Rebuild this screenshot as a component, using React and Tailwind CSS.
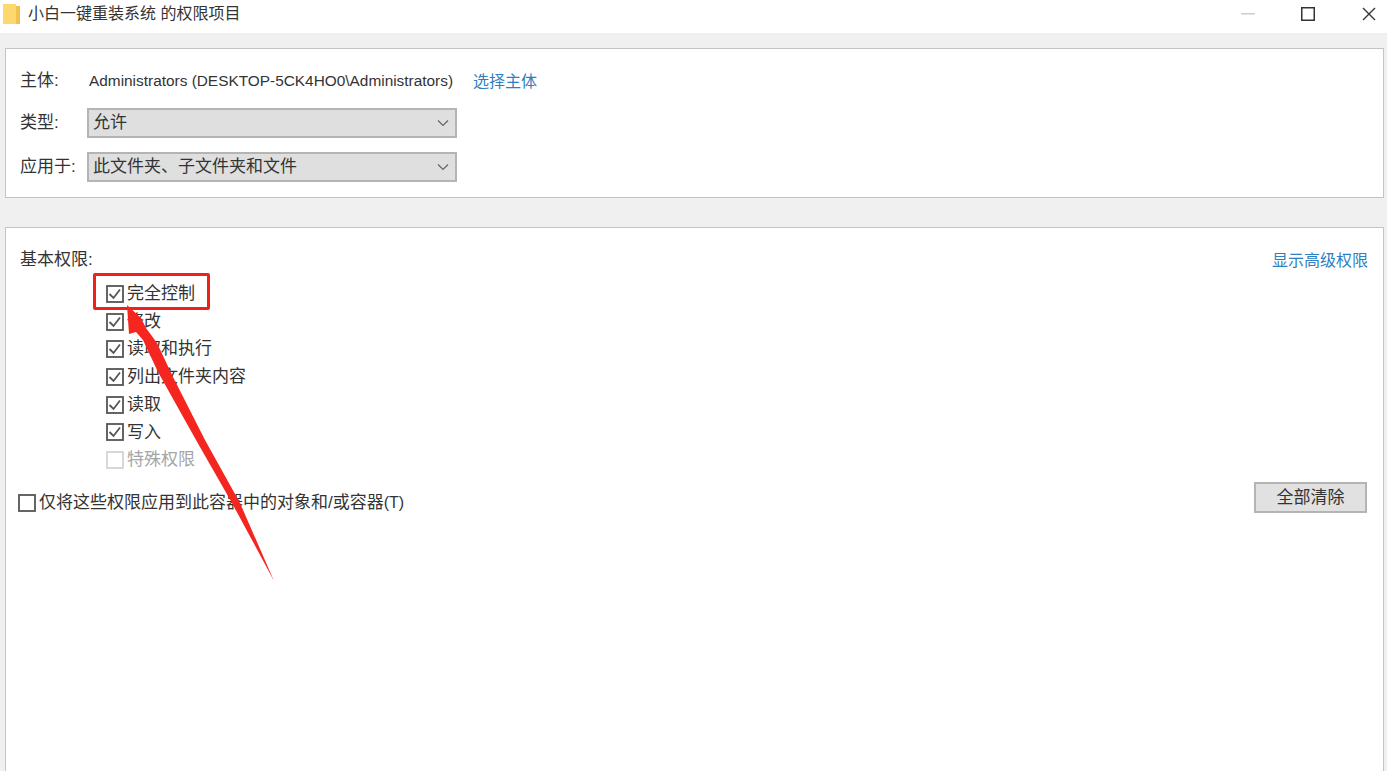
const font = "font-['Liberation_Sans','Noto_Sans_CJK_SC',sans-serif]";

const permissions = [
  { label: "完全控制", checked: true },
  { label: "修改", checked: true },
  { label: "读取和执行", checked: true },
  { label: "列出文件夹内容", checked: true },
  { label: "读取", checked: true },
  { label: "写入", checked: true },
  { label: "特殊权限", checked: false, disabled: true },
];

function Checkbox({ checked, disabled }) {
  return (
    <svg width="18" height="18" viewBox="0 0 18 18" className="shrink-0">
      <rect x="1" y="1" width="16" height="16" fill="#fff" stroke={disabled ? "#d4d4d4" : "#555"} strokeWidth="1.8" />
      {checked && <path d="M3.5 9 L7.5 13 L14 4.5" fill="none" stroke="#555" strokeWidth="1.8" />}
    </svg>
  );
}

function Select({ value }) {
  return (
    <div className="flex h-[30px] w-[370px] items-center justify-between border-2 border-[#b4b4b4] bg-[#dfdfdf] pl-[4px] pr-[3px] text-[17px] text-[#333]">
      <span>{value}</span>
      <svg width="18" height="18" viewBox="0 0 18 18">
        <path d="M4 6.5 L9 11.5 L14 6.5" fill="none" stroke="#666" strokeWidth="1.2" />
      </svg>
    </div>
  );
}

export default function App() {
  return (
    <div className={`${font} relative h-[771px] w-[1387px] overflow-hidden bg-[#f0f0f0] text-[#333]`}>
      {/* Title bar */}
      <div className="flex h-[33px] items-center bg-white pl-[3px]">
        <svg width="18" height="20" viewBox="0 0 18 20" className="mb-[5px]">
          <path d="M0 0 H13 V20 H0 Z" fill="#fbd96f" />
          <path d="M13 2 H17 V20 H13 Z" fill="#f0c14f" />
        </svg>
        <span className="ml-[7px] mb-[5px] text-[16px] text-[#333]">小白一键重装系统 的权限项目</span>
        <div className="ml-auto mb-[5px] flex items-center">
          <svg width="14" height="2" viewBox="0 0 14 2" className="mr-[46px]">
            <rect width="14" height="1.5" fill="#ccc" />
          </svg>
          <svg width="14" height="14" viewBox="0 0 14 14" className="mr-[47px]">
            <rect x="0.75" y="0.75" width="12.5" height="12.5" fill="none" stroke="#333" strokeWidth="1.5" />
          </svg>
          <svg width="14" height="14" viewBox="0 0 14 14" className="mr-[11px]">
            <path d="M1 1 L13 13 M13 1 L1 13" fill="none" stroke="#333" strokeWidth="1.4" />
          </svg>
        </div>
      </div>

      {/* Principal panel */}
      <div className="ml-[5px] mt-[15px] h-[150px] w-[1379px] border border-[#c4c4c4] bg-white pl-[14px] pt-[22px]">
        <div className="flex h-[20px] items-center">
          <span className="w-[69px] text-[17px]">主体:</span>
          <span className="text-[15.4px]">Administrators (DESKTOP-5CK4HO0\Administrators)</span>
          <span className="ml-[20px] mt-px text-[16px] text-[#2f7fc1]">选择主体</span>
        </div>
        <div className="mt-[17px] flex items-center">
          <span className="w-[67px] text-[17px]">类型:</span>
          <Select value="允许" />
        </div>
        <div className="mt-[14px] flex items-center">
          <span className="w-[67px] text-[17px]">应用于:</span>
          <Select value="此文件夹、子文件夹和文件" />
        </div>
      </div>

      {/* Permissions panel */}
      <div className="ml-[5px] mt-[29px] h-[560px] w-[1379px] border border-[#c4c4c4] bg-white pl-[14px] pr-[15px] pt-[22px]">
        <div className="flex h-[20px] items-center justify-between">
          <span className="text-[17px]">基本权限:</span>
          <span className="mt-[2px] text-[16px] text-[#2f7fc1]">显示高级权限</span>
        </div>
        <div className="ml-[86px] mt-[10px] flex flex-col">
          {permissions.map((p) => (
            <div key={p.label} className="flex h-[27.7px] items-center gap-[3px]">
              <Checkbox checked={p.checked} disabled={p.disabled} />
              <span className={`text-[17px] ${p.disabled ? "text-[#a5a5a5]" : "text-[#333]"}`}>{p.label}</span>
            </div>
          ))}
        </div>
        <div className="mt-[4px] flex items-center justify-between">
          <div className="mt-[12px] -ml-[2px] flex items-center gap-[3px]">
            <Checkbox />
            <span className="text-[17px]">
              仅将这些权限应用到此容器中的对象和/或容器<span className="text-[16px]">(T)</span>
            </span>
          </div>
          <div className="mr-px mt-[2px] flex h-[31px] w-[113px] items-center justify-center border-2 border-[#b4b4b4] bg-[#e1e1e1] text-[17px] text-[#333]">
            全部清除
          </div>
        </div>
      </div>

      {/* Annotation: highlight box */}
      <div className="absolute left-[93px] top-[273px] h-[37px] w-[117px] rounded-[2px] border-[3px] border-[#f0211c]" />

      {/* Annotation: arrow */}
      <svg className="absolute left-0 top-0" width="1387" height="771" viewBox="0 0 1387 771">
        <path d="M127 305 L141 318 L146 328 L157 343 L173 377 L205 440 L240 503 L274 581 L232 503 L196 440 L158 372 L143 340 L136 332 L129 334 Z" fill="#f5261f" />
      </svg>
    </div>
  );
}
